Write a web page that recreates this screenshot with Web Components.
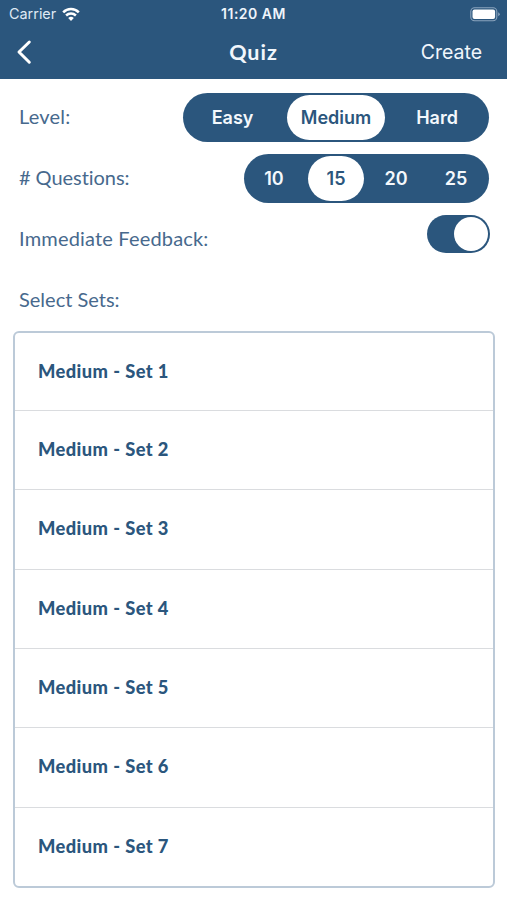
<!DOCTYPE html>
<html lang="en"><head><meta charset="utf-8"><title>Quiz</title>
<style>
html,body{margin:0;height:100%;background:#fff;overflow:hidden}
body{--navy:#2b567d;font-family:Lato,sans-serif;color:var(--navy)}
</style></head><body>
<quiz-app></quiz-app>
<script>
const define = (name, html, init) => customElements.define(name, class extends HTMLElement {
  constructor(){ super(); this.attachShadow({mode:'open'}); }
  connectedCallback(){ this.shadowRoot.innerHTML = html; if (init) init(this, this.shadowRoot); }
});

define('status-bar', `<style>
:host{display:grid;grid-template-columns:1fr auto 1fr;align-items:center;height:27px;padding:0 7px;font:400 14.4px/28px Inter,sans-serif;color:#dfe9f4}
.left{display:flex;align-items:center;gap:6px;padding-left:2px}
.time{font-weight:600;font-size:14px;letter-spacing:.5px;color:#eef4fb}
.bat{justify-self:end;display:block}
svg{display:block}
</style>
<div class="left"><span>Carrier</span>
<svg width="18" height="15" viewBox="0 0 18 15" fill="none" stroke="#fff" stroke-width="2.5"><path d="M1.2 5.3C5.5.8 12.5.8 16.8 5.3"/><path d="M4.1 8.5c2.8-2.7 7-2.7 9.8 0"/><path d="M6.2 10.9Q9 8.7 11.8 10.9L9 14Z" fill="#fff" stroke="none"/></svg></div>
<span class="time">11:20 AM</span>
<svg class="bat" width="30" height="15" viewBox="0 0 30 15"><rect x=".8" y=".8" width="26" height="13" rx="3.8" fill="none" stroke="#8ba4bd" stroke-width="1.1"/><rect x="2.5" y="2.5" width="22.6" height="9.6" rx="2" fill="#fff"/><path d="M28.2 5.3q3.2 2 0 4Z" fill="#8ba4bd"/></svg>`);

define('nav-bar', `<style>
:host{display:grid;grid-template-columns:1fr auto 1fr;align-items:center;height:50px;padding:0 16px;color:#f1f6fc}
svg{display:block}
.title{font:700 21.5px/50px Lato,sans-serif;letter-spacing:1px}
.action{justify-self:end;font:400 19.5px/50px Inter,sans-serif;margin-right:9px}
</style>
<svg width="17" height="26" viewBox="0 0 17 26" fill="none" stroke="#fff" stroke-width="3" stroke-linecap="round" stroke-linejoin="round"><path d="M13.3 3 3 13l10.3 10.2"/></svg>
<span class="title"><slot></slot></span><span class="action">Create</span>`);

define('setting-row', `<style>
:host{display:flex;justify-content:space-between;align-items:flex-start;height:61px;padding:0 18px 0 19px;box-sizing:border-box}
.label{font:400 20px/46px Lato,sans-serif;letter-spacing:var(--ls,.4px);color:#47698d;white-space:nowrap}
</style><span class="label"></span><slot></slot>`,
(h,r)=>{ r.querySelector('.label').textContent = h.getAttribute('label'); });

define('segment-control', `<style>
:host{display:flex;box-sizing:border-box;height:49px;padding:2px 3px 2px 0;border-radius:24.5px;background:var(--navy);color:#f4f8fc}
span{display:block;text-align:center;border-radius:22.5px;font:600 18px/45px Inter,sans-serif;white-space:nowrap}
.on{background:#fff;color:var(--navy)}
</style>`,
(h,r)=>{
  const widths = h.getAttribute('widths').split(',');
  h.getAttribute('options').split(',').forEach((t,i)=>{
    const s = document.createElement('span');
    s.textContent = t; s.style.width = widths[i]+'px';
    if (t === h.getAttribute('value')) { s.className = 'on'; s.style.margin = h.getAttribute('gap'); }
    r.append(s);
  });
});

define('toggle-switch', `<style>
:host{display:flex;justify-content:flex-end;box-sizing:border-box;width:63px;height:38px;padding:2px;border-radius:19px;background:var(--navy);margin-right:-1px}
i{display:block;width:34px;height:34px;border-radius:50%;background:#fff}
</style><i></i>`);

define('set-item', `<style>
:host{display:flex;align-items:center;flex:1;padding:0 0 2px 23px;font:900 18.3px/24px Lato,sans-serif;letter-spacing:.42px;border-top:1px solid #dadcdf}
:host(:first-child){border-top:0;flex:none;height:75px}
</style><slot></slot>`);

define('set-list', `<style>
:host{display:flex;flex-direction:column;box-sizing:border-box;height:557px;margin:0 12px 0 13px;border:2px solid #bccad8;border-radius:6px}
</style><slot></slot>`);

define('quiz-app', `<style>
:host{display:block}
header{background:var(--navy);height:79px}
main{padding-top:14px}
set-list{margin-top:-6px}
</style>
<header><status-bar></status-bar><nav-bar>Quiz</nav-bar></header>
<main>
<setting-row label="Level:" style="--ls:.2px"><segment-control options="Easy,Medium,Hard" widths="99,98,98" value="Medium" gap="0 3px 0 5px"></segment-control></setting-row>
<setting-row label="# Questions:" style="--ls:-.05px"><segment-control options="10,15,20,25" widths="60,56,60,60" value="15" gap="0 2px 0 4px"></segment-control></setting-row>
<setting-row label="Immediate Feedback:" style="--ls:.18px"><toggle-switch></toggle-switch></setting-row>
<setting-row label="Select Sets:" style="--ls:0px"></setting-row>
<set-list>${[1,2,3,4,5,6,7].map(n=>`<set-item>Medium - Set ${n}</set-item>`).join('')}</set-list>
</main>`);
</script></body></html>
